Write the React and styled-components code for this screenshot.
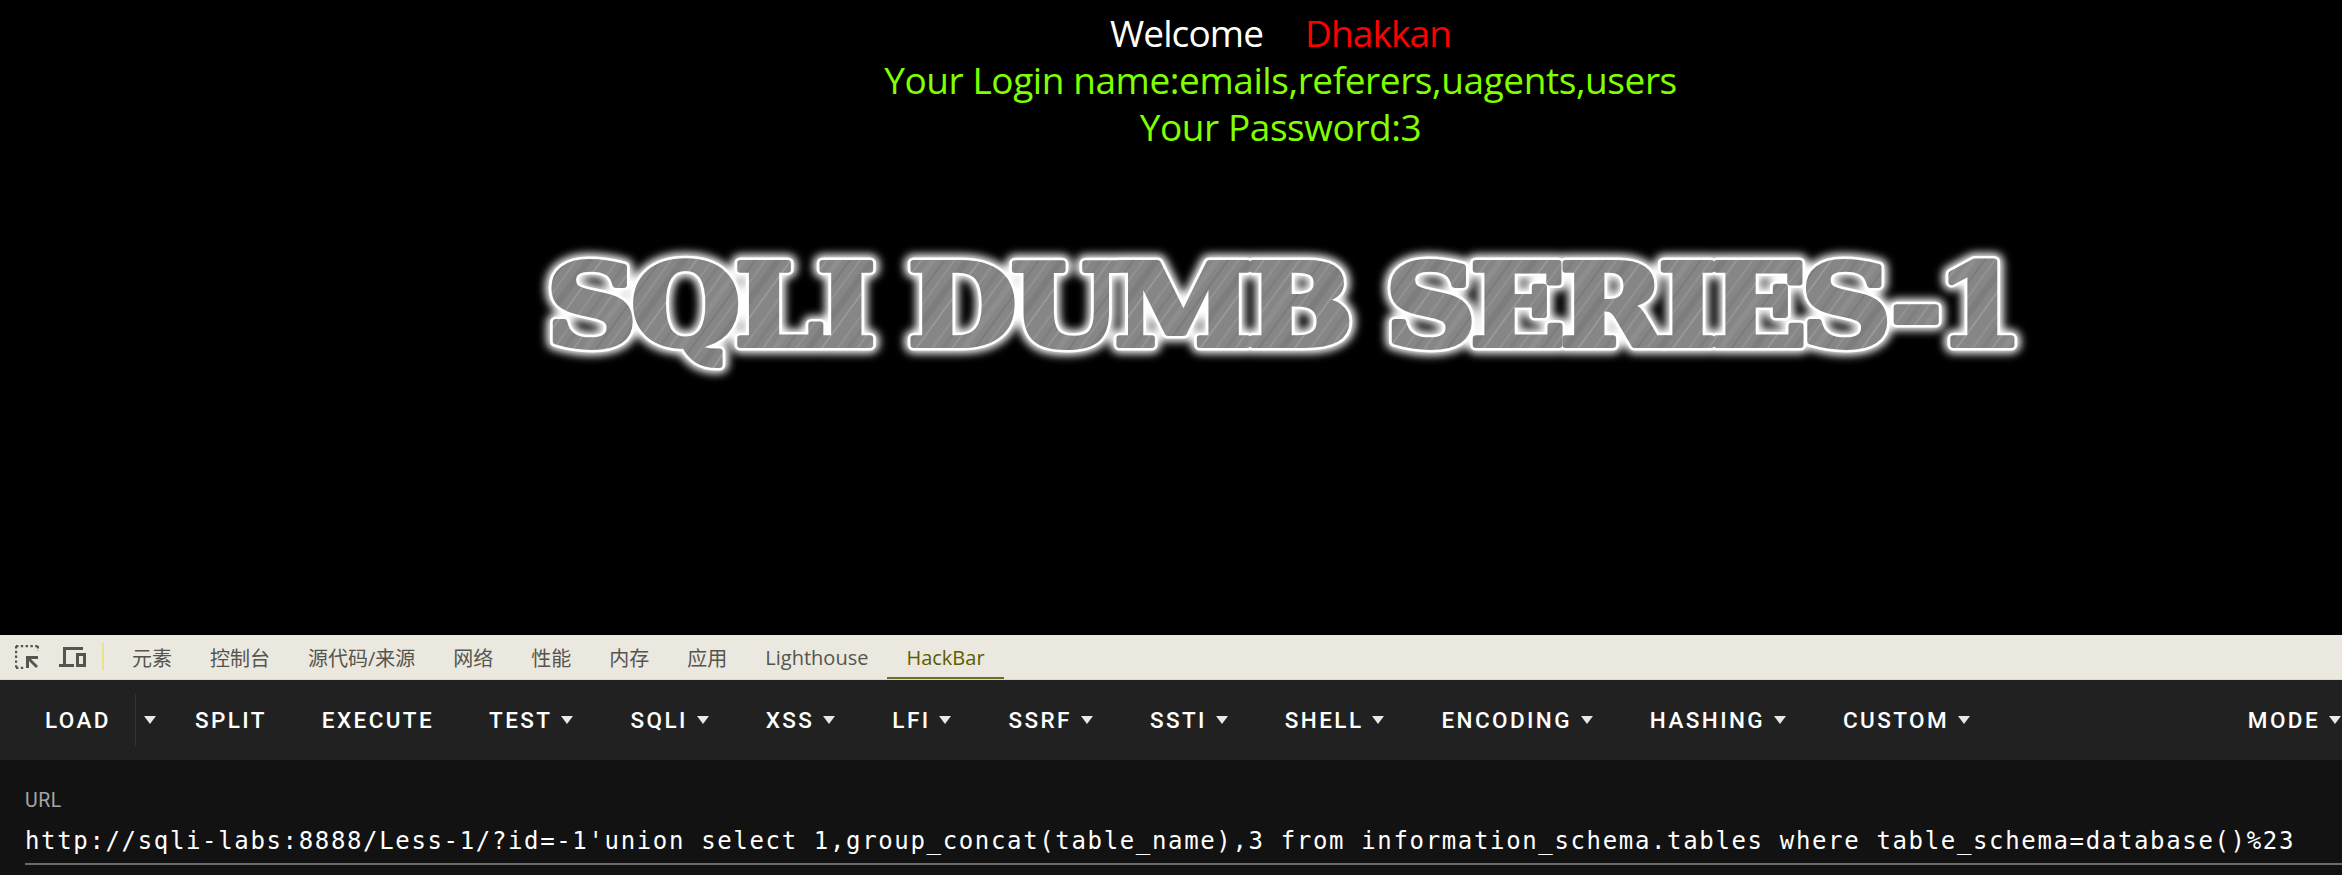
import styled, { createGlobalStyle } from "styled-components"

const GlobalStyle = createGlobalStyle`
  html, body {
    margin: 0;
    padding: 0;
    background: #000;
    overflow: hidden;
  }
`

const tabs = ["元素", "控制台", "源代码/来源", "网络", "性能", "内存", "应用", "Lighthouse"]
const menus = ["TEST", "SQLI", "XSS", "LFI", "SSRF", "SSTI", "SHELL", "ENCODING", "HASHING", "CUSTOM"]
const url = "http://sqli-labs:8888/Less-1/?id=-1'union select 1,group_concat(table_name),3 from information_schema.tables where table_schema=database()%23"

const Logo = () => (
  <LogoSvg viewBox="0 0 1500 140" width="1500" height="140">
    <defs>
      <pattern id="brushed" width="71" height="90" patternUnits="userSpaceOnUse" patternTransform="rotate(33)">
        <rect width="71" height="90" fill="#868686" />
        <rect x="4" width="1.5" height="90" fill="#949494" />
        <rect x="11" width="3" height="90" fill="#7f7f7f" />
        <rect x="19" width="1" height="90" fill="#a0a0a0" />
        <rect x="26" width="5" height="90" fill="#8e8e8e" />
        <rect x="36" width="1.5" height="90" fill="#787878" />
        <rect x="44" width="1" height="90" fill="#9a9a9a" />
        <rect x="51" width="6" height="90" fill="#7d7d7d" />
        <rect x="63" width="1.5" height="90" fill="#9c9c9c" />
      </pattern>
      <filter id="glow" x="-5%" y="-30%" width="110%" height="160%">
        <feGaussianBlur stdDeviation="4" />
      </filter>
    </defs>
    <g transform="scale(1.117 1)">
      <LogoText $layer="glow" x="14" y="104" filter="url(#glow)">SQLI DUMB SERIES-1</LogoText>
      <LogoText $layer="edge" x="14" y="104">SQLI DUMB SERIES-1</LogoText>
      <LogoText $layer="face" x="14" y="104">SQLI DUMB SERIES-1</LogoText>
    </g>
  </LogoSvg>
)

const InspectIcon = () => (
  <svg width="24" height="24" viewBox="0 0 24 24">
    <path d="M1 1H23M1 1V23M1 23H9" fill="none" stroke="#55554e" strokeWidth="2.4" strokeDasharray="2.4 2.4" />
    <path d="M23 1V6" fill="none" stroke="#55554e" strokeWidth="2.4" strokeDasharray="2.4 2.4" />
    <path d="M11 11H23V14H16L23 21L21 23L14 16V23H11Z" fill="#55554e" />
  </svg>
)

const DeviceIcon = () => (
  <svg width="28" height="22" viewBox="0 0 28 22">
    <path d="M4 1H24V4H7V18H15V21H0V18H4Z" fill="#55554e" />
    <path d="M17 7H27V21H17ZM20 10V18H24V10Z" fill="#55554e" fillRule="evenodd" />
  </svg>
)

export default function App() {
  return (
    <Page>
      <GlobalStyle />
      <Stage>
        <Line $tight>
          Welcome<Name>Dhakkan</Name>
        </Line>
        <Line $green>Your Login name:emails,referers,uagents,users</Line>
        <Line $green>Your Password:3</Line>
        <Logo />
      </Stage>

      <TabBar>
        <IconGroup>
          <InspectIcon />
          <DeviceIcon />
        </IconGroup>
        <Separator />
        {tabs.map((t) => (
          <Tab key={t}>{t}</Tab>
        ))}
        <Tab $active>HackBar</Tab>
      </TabBar>

      <Toolbar>
        <ToolButton $load>LOAD</ToolButton>
        <CaretButton>
          <Caret />
        </CaretButton>
        <ToolButton>SPLIT</ToolButton>
        <ToolButton>EXECUTE</ToolButton>
        {menus.map((m) => (
          <ToolButton key={m} $menu>
            {m}
            <Caret />
          </ToolButton>
        ))}
        <ToolButton $mode>
          MODE
          <Caret />
        </ToolButton>
      </Toolbar>

      <UrlPanel>
        <UrlLabel>URL</UrlLabel>
        <UrlValue>{url}</UrlValue>
      </UrlPanel>
    </Page>
  )
}

const Page = styled.div`
  display: flex;
  flex-direction: column;
  width: 2342px;
  height: 875px;
  overflow: hidden;
  background: #000;
`

const Stage = styled.div`
  box-sizing: border-box;
  height: 635px;
  padding: 9px 0 0 219px;
  display: flex;
  flex-direction: column;
  align-items: center;
  font-family: "Open Sans", "Noto Sans", sans-serif;
  font-size: 37px;
`

const Line = styled.div`
  height: 47px;
  line-height: 47px;
  letter-spacing: ${(p) => (p.$tight ? "-0.9px" : "-0.42px")};
  white-space: nowrap;
  color: ${(p) => (p.$green ? "#7fff00" : "#fff")};
`

const Name = styled.span`
  margin-left: 42px;
  color: #ff0000;
`

const LogoSvg = styled.svg`
  display: block;
  margin-top: 91px;
  overflow: visible;
`

const LogoText = styled.text`
  font-family: "DejaVu Serif", "Liberation Serif", serif;
  font-weight: 700;
  font-size: 112px;
  letter-spacing: -5px;
  stroke-linejoin: round;
  fill: ${(p) => (p.$layer === "face" ? "url(#brushed)" : "#fff")};
  stroke: ${(p) => (p.$layer === "face" ? "url(#brushed)" : "#fff")};
  stroke-width: ${(p) => (p.$layer === "glow" ? 17 : p.$layer === "edge" ? 11 : 6)}px;
`

const TabBar = styled.div`
  box-sizing: border-box;
  height: 45px;
  display: flex;
  align-items: stretch;
  padding-left: 15px;
  background: #ebe8e0;
  border-bottom: 1px solid #e4e47c;
  font-family: "Open Sans", "Noto Sans CJK SC", sans-serif;
  font-size: 20px;
  color: #55554e;
`

const IconGroup = styled.div`
  display: flex;
  align-items: center;
  gap: 20px;
`

const Separator = styled.div`
  width: 2px;
  height: 27px;
  margin: 8px 9px 0 15px;
  background: #e6e38a;
`

const Tab = styled.div`
  display: flex;
  align-items: center;
  padding: 0 19px;
  white-space: nowrap;
  color: ${(p) => (p.$active ? "#5c5c00" : "#55554e")};
  box-shadow: ${(p) => (p.$active ? "inset 0 -2px 0 #6f6f1e" : "none")};
`

const Toolbar = styled.div`
  box-sizing: border-box;
  height: 80px;
  display: flex;
  align-items: center;
  gap: 6px;
  padding-left: 21px;
  background: #212121;
  font-family: Roboto, "Liberation Sans", sans-serif;
  font-size: 22.5px;
  font-weight: 500;
  letter-spacing: 2.4px;
  color: #fff;
`

const ToolButton = styled.div`
  display: flex;
  align-items: center;
  gap: 9px;
  height: 54px;
  padding: 0 ${(p) => (p.$menu ? "27px" : p.$mode ? "1px" : "25px")} 0 24px;
  white-space: nowrap;
  margin-right: ${(p) => (p.$load ? "-7px" : "0")};
  margin-left: ${(p) => (p.$mode ? "auto" : "0")};
`

const CaretButton = styled.div`
  box-sizing: border-box;
  display: flex;
  align-items: center;
  justify-content: center;
  width: 30px;
  height: 52px;
  border-left: 1px solid #333;
`

const Caret = styled.span`
  width: 0;
  height: 0;
  border-left: 6px solid transparent;
  border-right: 6px solid transparent;
  border-top: 8px solid #e8e8e8;
`

const UrlPanel = styled.div`
  flex: 1;
  padding: 30px 0 0 25px;
  background: #121212;
`

const UrlLabel = styled.div`
  height: 22px;
  line-height: 22px;
  font-family: Roboto, "Liberation Sans", sans-serif;
  font-size: 19.5px;
  letter-spacing: 0.5px;
  color: #a6a6a6;
`

const UrlValue = styled.div`
  height: 47px;
  line-height: 46px;
  box-sizing: border-box;
  margin-top: 6px;
  border-bottom: 2px solid #6b6b6b;
  font-family: "DejaVu Sans Mono", "Liberation Mono", monospace;
  font-size: 24px;
  letter-spacing: 1.65px;
  color: #fff;
  white-space: nowrap;
`
